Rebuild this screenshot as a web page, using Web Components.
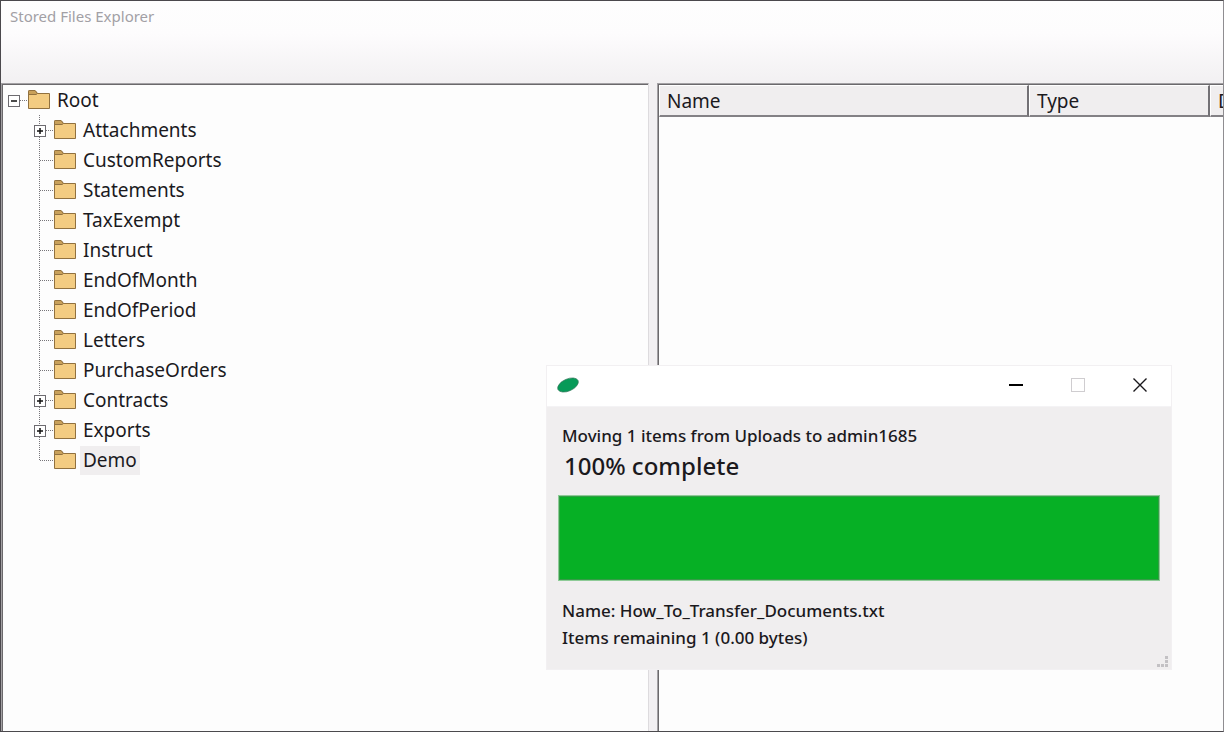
<!DOCTYPE html>
<html lang="en">
<head>
<meta charset="utf-8">
<title>Stored Files Explorer</title>
<style>
  html, body { height: 100%; margin: 0; }
  body { font-family: "Noto Sans", "Open Sans", sans-serif; color: #1b1a1e; background: #fdfdfd; overflow: hidden; }
</style>
</head>
<body>
<files-explorer>
  <span slot="title">Stored Files Explorer</span>
  <folder-tree slot="tree">
    <tree-folder toggle="minus" root>Root</tree-folder>
    <tree-folder toggle="plus">Attachments</tree-folder>
    <tree-folder>CustomReports</tree-folder>
    <tree-folder>Statements</tree-folder>
    <tree-folder>TaxExempt</tree-folder>
    <tree-folder>Instruct</tree-folder>
    <tree-folder>EndOfMonth</tree-folder>
    <tree-folder>EndOfPeriod</tree-folder>
    <tree-folder>Letters</tree-folder>
    <tree-folder>PurchaseOrders</tree-folder>
    <tree-folder toggle="plus">Contracts</tree-folder>
    <tree-folder toggle="plus">Exports</tree-folder>
    <tree-folder selected last>Demo</tree-folder>
  </folder-tree>
  <file-list slot="list"></file-list>
  <transfer-dialog slot="dialog">
    <span slot="summary">Moving 1 items from Uploads to admin1685</span>
    <span slot="percent">100% complete</span>
    <span slot="name">Name: How_To_Transfer_Documents.txt</span>
    <span slot="remaining">Items remaining 1 (0.00 bytes)</span>
  </transfer-dialog>
</files-explorer>

<script>
class FilesExplorer extends HTMLElement {
  constructor() {
    super();
    this.attachShadow({ mode: 'open' }).innerHTML = `
      <style>
        :host { display: flex; flex-direction: column; position: relative; box-sizing: border-box; height: 100%;
                border: 1px solid #4b494d; border-right-color: #8f8d91; overflow: hidden; background: #f2f0f2; }
        header { box-sizing: border-box; height: 82px; flex: none; padding: 3px 9px;
                 background: linear-gradient(#fefefe 0%, #fdfcfd 40%, #f2f0f2 100%); }
        h1 { margin: 0; font-size: 15px; line-height: 24px; font-weight: 400; color: #a2a0a5; }
        main { flex: 1; min-height: 0; display: grid; grid-template-columns: minmax(0, 648fr) 8px minmax(0, 566fr); }
        .pane { display: flex; flex-direction: column; min-width: 0; overflow: hidden; background: #fdfdfd;
                border: 1px solid #a3a1a4; border-right: 0; border-bottom: 0; }
        .pane > div { flex: 1; border: 1px solid #6b696c; border-right: 0; border-bottom: 0; min-width: 0; }
        .left { border-right: 1px solid #dddbde; }
      </style>
      <header><h1><slot name="title"></slot></h1></header>
      <main>
        <div class="pane left"><div><slot name="tree"></slot></div></div>
        <span></span>
        <div class="pane"><div><slot name="list"></slot></div></div>
      </main>
      <slot name="dialog"></slot>`;
  }
}

class FolderTree extends HTMLElement {
  constructor() {
    super();
    this.setAttribute('role', 'tree');
    this.attachShadow({ mode: 'open' }).innerHTML = `
      <style>:host { display: flex; flex-direction: column; padding-left: 5px; }</style>
      <slot></slot>`;
  }
}

class TreeFolder extends HTMLElement {
  constructor() {
    super();
    const root = this.hasAttribute('root');
    const toggle = this.getAttribute('toggle');
    const name = this.textContent;
    this.setAttribute('role', 'treeitem');
    const lines = `
      <svg class="lines" width="20" height="30" stroke="#77757a" stroke-dasharray="1 1" fill="none" aria-hidden="true">
        ${root ? '' : `<path d="M5.5 0V${this.hasAttribute('last') ? 16 : 30}"/>`}
        <path d="M6 15.5H20"/>
      </svg>`;
    const box = toggle ? `
      <button type="button" aria-label="${toggle === 'plus' ? 'Expand' : 'Collapse'} ${name}">
        <svg width="12" height="12" fill="none">
          <rect x=".5" y=".5" width="11" height="11" fill="#fff" stroke="#6d6b70"/>
          <path d="M3 6H9${toggle === 'plus' ? 'M6 3V9' : ''}" stroke="#111" stroke-width="1.5"/>
        </svg>
      </button>` : '';
    this.attachShadow({ mode: 'open' }).innerHTML = `
      <style>
        :host { display: flex; align-items: center; height: 30px; }
        :host(:not([root])) { padding-left: 26px; }
        .guide { display: grid; align-items: center; width: 20px; height: 30px; }
        .guide > * { grid-area: 1 / 1; }
        button { appearance: none; display: block; width: 12px; height: 12px; margin: 2px 0 0; padding: 0; border: 0; background: none; }
        svg { display: block; }
        .label { margin-left: 4px; padding: 0 3px; font-size: 19px; line-height: 29px; }
        :host([selected]) .label { background: #f0eeef; }
      </style>
      <span class="guide">${lines}${box}</span>
      <svg width="22" height="20" stroke="#91713f" aria-hidden="true">
        <path d="M.5 18.5V1.5Q.5 .5 1.5 .5H7L9.500 3.500H21.500V18.500Z" fill="#f3cc82"/>
        <path d="M.5 4.500V1.500Q.5 .5 1.500 .5H7L9.500 3.500L8 4.500Z" fill="#c9a15a"/>
      </svg>
      <span class="label"><slot></slot></span>`;
  }
}

class FileList extends HTMLElement {
  constructor() {
    super();
    this.attachShadow({ mode: 'open' }).innerHTML = `
      <style>
        :host { display: block; overflow: hidden; }
        table { table-layout: fixed; width: 732px; border-collapse: separate; border-spacing: 0; }
        .name { width: 370px; } .type { width: 181px; }
        th { box-sizing: border-box; height: 32px; padding: 2px 7px 0; text-align: left; font-size: 19px; line-height: 27px; font-weight: 400;
             background: #f0eeef; border: solid; border-width: 1px 2px 2px 1px; border-color: #fff #737175 #838185 #fff; }
      </style>
      <table>
        <colgroup><col class="name"><col class="type"><col></colgroup>
        <thead><tr><th scope="col">Name</th><th scope="col">Type</th><th scope="col">D</th></tr></thead>
      </table>`;
  }
}

class TransferDialog extends HTMLElement {
  constructor() {
    super();
    this.setAttribute('role', 'dialog');
    this.setAttribute('aria-label', 'File transfer');
    this.attachShadow({ mode: 'open' }).innerHTML = `
      <style>
        :host { display: block; position: absolute; right: 51px; bottom: 61px; width: 626px; box-sizing: border-box;
                border: 1px solid #f2f0f2; background: #f0eeef; font-weight: 500; color: #1b191d; }
        .bar { display: flex; align-items: center; height: 40px; padding-left: 10px; background: #fff; border-bottom: 1px solid #f4f3f5; }
        .bar button { appearance: none; display: grid; place-items: center; width: 62px; height: 38px; margin-bottom: 2px; padding: 0; border: 0; background: none; }
        .logo { margin-right: auto; margin-bottom: 2px; }
        .body { padding: 15px 11px 18px; }
        p { margin: 0; padding-left: 4px; font-size: 17px; line-height: 27px; }
        .percent { padding-left: 6px; font-size: 24px; line-height: 33px; }
        progress { appearance: none; display: block; box-sizing: border-box; width: 100%; height: 86px; margin: 13px 0 16px;
                   border: 1px solid #8ecb97; background: #06b025; }
        progress::-webkit-progress-bar { background: #e6e6e6; }
        progress::-webkit-progress-value { background: #06b025; box-shadow: inset 0 0 0 1px #359c47; }
        .grip { position: absolute; right: 2px; bottom: 1px; }
      </style>
      <div class="bar">
        <svg class="logo" width="24" height="18" aria-hidden="true"><ellipse cx="11" cy="9" rx="11" ry="6" transform="rotate(-24 11 9)" fill="#079a58" stroke="#35745a" stroke-width=".6"/></svg>
        <button type="button" aria-label="Minimize"><svg width="14" height="14"><path d="M0 7H14" stroke="#000" stroke-width="2"/></svg></button>
        <button type="button" aria-label="Maximize" disabled><svg width="14" height="14"><rect x=".5" y=".5" width="13" height="13" fill="none" stroke="#cfcdd0"/></svg></button>
        <button type="button" aria-label="Close"><svg width="14" height="14"><path d="M.5 .5L13.500 13.500M13.500 .5L.5 13.500" stroke="#19171b" stroke-width="1.400"/></svg></button>
      </div>
      <div class="body">
        <p><slot name="summary"></slot></p>
        <p class="percent"><slot name="percent"></slot></p>
        <progress value="100" max="100" aria-label="Transfer progress"></progress>
        <p><slot name="name"></slot></p>
        <p><slot name="remaining"></slot></p>
      </div>
      <svg class="grip" width="12" height="12" fill="#c3c1c4" aria-hidden="true"><path d="M8 0h3v3h-3zM8 4h3v3h-3zM8 8h3v3h-3zM4 8h3v3h-3zM0 8h3v3h-3z"/></svg>`;
  }
}

customElements.define('files-explorer', FilesExplorer);
customElements.define('folder-tree', FolderTree);
customElements.define('tree-folder', TreeFolder);
customElements.define('file-list', FileList);
customElements.define('transfer-dialog', TransferDialog);
</script>
</body>
</html>
